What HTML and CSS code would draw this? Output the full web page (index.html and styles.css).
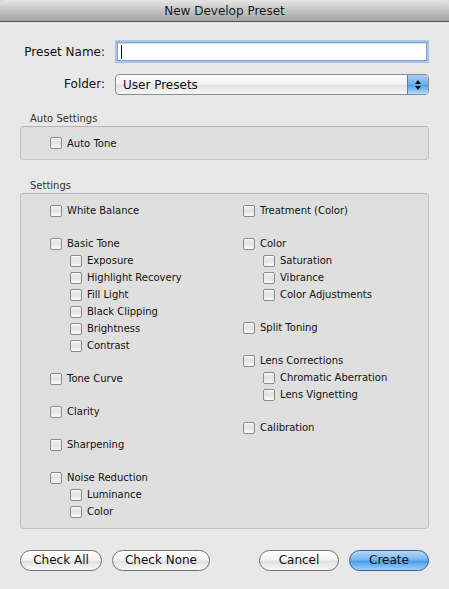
FILE: index.html
```html
<!DOCTYPE html>
<html>
<head>
<meta charset="utf-8">
<title>New Develop Preset</title>
<link rel="stylesheet" href="styles.css">
</head>
<body>
<div class="window">
  <div class="titlebar">New Develop Preset</div>
  <div class="content">
    <div class="fields">
      <label class="flabel">Preset Name:</label>
      <div class="input"><span class="caret"></span></div>
      <label class="flabel folder-label">Folder:</label>
      <div class="select">
        <span class="select-text">User Presets</span>
        <span class="select-arrows">
          <svg width="8" height="12" viewBox="0 0 8 12"><path d="M4 1 L7 5 L1 5 Z" fill="#111"/><path d="M4 11 L7 7 L1 7 Z" fill="#111"/></svg>
        </span>
      </div>
    </div>

    <div class="section-label auto-label">Auto Settings</div>
    <div class="box auto-box">
      <div class="item"><span class="cb"></span>Auto Tone</div>
    </div>

    <div class="section-label settings-label">Settings</div>
    <div class="box settings-box">
      <div class="col col-left">
        <div class="group">
          <div class="item"><span class="cb"></span>White Balance</div>
        </div>
        <div class="group">
          <div class="item"><span class="cb"></span>Basic Tone</div>
          <div class="item sub"><span class="cb"></span>Exposure</div>
          <div class="item sub"><span class="cb"></span>Highlight Recovery</div>
          <div class="item sub"><span class="cb"></span>Fill Light</div>
          <div class="item sub"><span class="cb"></span>Black Clipping</div>
          <div class="item sub"><span class="cb"></span>Brightness</div>
          <div class="item sub"><span class="cb"></span>Contrast</div>
        </div>
        <div class="group">
          <div class="item"><span class="cb"></span>Tone Curve</div>
        </div>
        <div class="group">
          <div class="item"><span class="cb"></span>Clarity</div>
        </div>
        <div class="group">
          <div class="item"><span class="cb"></span>Sharpening</div>
        </div>
        <div class="group">
          <div class="item"><span class="cb"></span>Noise Reduction</div>
          <div class="item sub"><span class="cb"></span>Luminance</div>
          <div class="item sub"><span class="cb"></span>Color</div>
        </div>
      </div>
      <div class="col col-right">
        <div class="group">
          <div class="item"><span class="cb"></span>Treatment (Color)</div>
        </div>
        <div class="group">
          <div class="item"><span class="cb"></span>Color</div>
          <div class="item sub"><span class="cb"></span>Saturation</div>
          <div class="item sub"><span class="cb"></span>Vibrance</div>
          <div class="item sub"><span class="cb"></span>Color Adjustments</div>
        </div>
        <div class="group">
          <div class="item"><span class="cb"></span>Split Toning</div>
        </div>
        <div class="group">
          <div class="item"><span class="cb"></span>Lens Corrections</div>
          <div class="item sub"><span class="cb"></span>Chromatic Aberration</div>
          <div class="item sub"><span class="cb"></span>Lens Vignetting</div>
        </div>
        <div class="group">
          <div class="item"><span class="cb"></span>Calibration</div>
        </div>
      </div>
    </div>

    <div class="buttons">
      <div class="btn btn-checkall">Check All</div>
      <div class="btn btn-checknone">Check None</div>
      <div class="spacer"></div>
      <div class="btn btn-cancel">Cancel</div>
      <div class="btn btn-create">Create</div>
    </div>
  </div>
</div>
</body>
</html>
```

FILE: styles.css
```css
html {
  background: #d8d8d8;
}
body {
  margin: 0;
  width: 449px;
  height: 589px;
  overflow: hidden;
  font-family: "DejaVu Sans", sans-serif;
  color: #111;
}
.window {
  width: 449px;
  height: 589px;
  background: #e8e8e8;
  border-radius: 5px 5px 0 0;
  overflow: hidden;
}
.titlebar {
  height: 21px;
  border-bottom: 1px solid #4e4e4e;
  background: linear-gradient(#e6e6e6, #c4c4c4 50%, #a4a4a4);
  font-size: 12px;
  line-height: 22px;
  text-align: center;
  color: #1a1a1a;
}
.content {
  padding: 0 20px 0 20px;
}
.fields {
  display: grid;
  grid-template-columns: 85px 314px;
  column-gap: 10px;
  row-gap: 10px;
  padding-top: 18px;
  align-items: center;
}
.flabel {
  font-size: 12px;
  text-align: right;
  color: #111;
}
.folder-label {
  padding-right: 0;
}
.input {
  height: 17px;
  border: 1px solid #8aa3c6;
  box-shadow: 0 0 0 2px #a9c4e8, inset 0 1px 1px rgba(0,0,0,0.15);
  background: #fff;
  margin: 2px;
  display: flex;
  align-items: center;
  padding-left: 3px;
}
.caret {
  width: 1px;
  height: 14px;
  background: #000;
}
.select {
  height: 21px;
  border: 1px solid #8c8c8c;
  border-radius: 4px;
  background: linear-gradient(#ffffff, #f2f2f2 45%, #e4e4e4 55%, #f6f6f6);
  display: flex;
  align-items: center;
  box-sizing: border-box;
  overflow: hidden;
  margin-top: 1px;
}
.select-text {
  flex: 1;
  font-size: 12px;
  padding-left: 7px;
}
.select-arrows {
  width: 20px;
  height: 100%;
  border-left: 1px solid #5f7fb8;
  background: linear-gradient(#a9d0f5, #6aaef0 50%, #4d9ce8 52%, #b4dcfb);
  display: flex;
  align-items: center;
  justify-content: center;
}
.section-label {
  font-size: 10px;
  color: #333;
  padding-left: 10px;
  line-height: 12px;
}
.auto-label {
  margin-top: 18px;
}
.settings-label {
  margin-top: 20px;
}
.box {
  background: #dfdfdf;
  border: 1px solid #c2c2c2;
  border-top-color: #b4b4b4;
  border-radius: 4px;
  margin-top: 1px;
}
.auto-box {
  height: 32px;
  padding-left: 29px;
  display: flex;
  align-items: center;
}
.settings-box {
  height: 336px;
  box-sizing: border-box;
  padding: 8px 0 0 29px;
  display: flex;
}
.col {
  display: flex;
  flex-direction: column;
  gap: 16px;
}
.col-left {
  width: 193px;
}
.item {
  height: 17px;
  display: flex;
  align-items: center;
  font-size: 10px;
  color: #111;
  white-space: nowrap;
}
.item.sub {
  padding-left: 20px;
}
.cb {
  width: 10px;
  height: 10px;
  border: 1px solid #8a8a8a;
  border-radius: 2px;
  background: linear-gradient(#f0f0f0, #e2e2e2 50%, #fbfbfb);
  box-shadow: inset 0 1px 0 rgba(255,255,255,0.8);
  margin-right: 5px;
  flex: none;
}
.buttons {
  display: flex;
  gap: 10px;
  margin-top: 21px;
}
.spacer {
  flex: 1;
}
.btn {
  height: 19px;
  border: 1px solid #707070;
  border-radius: 11px;
  background: linear-gradient(#ffffff, #f3f3f3 45%, #e2e2e2 55%, #f7f7f7);
  font-size: 12px;
  line-height: 19px;
  text-align: center;
  color: #111;
}
.btn-checkall { width: 80px; }
.btn-checknone { width: 96px; }
.btn-cancel { width: 78px; }
.btn-create {
  width: 78px;
  border-color: #3d5a99;
  background: linear-gradient(#b5d8f8, #79b6f0 45%, #4f9cea 55%, #9ad0fb);
}
```
